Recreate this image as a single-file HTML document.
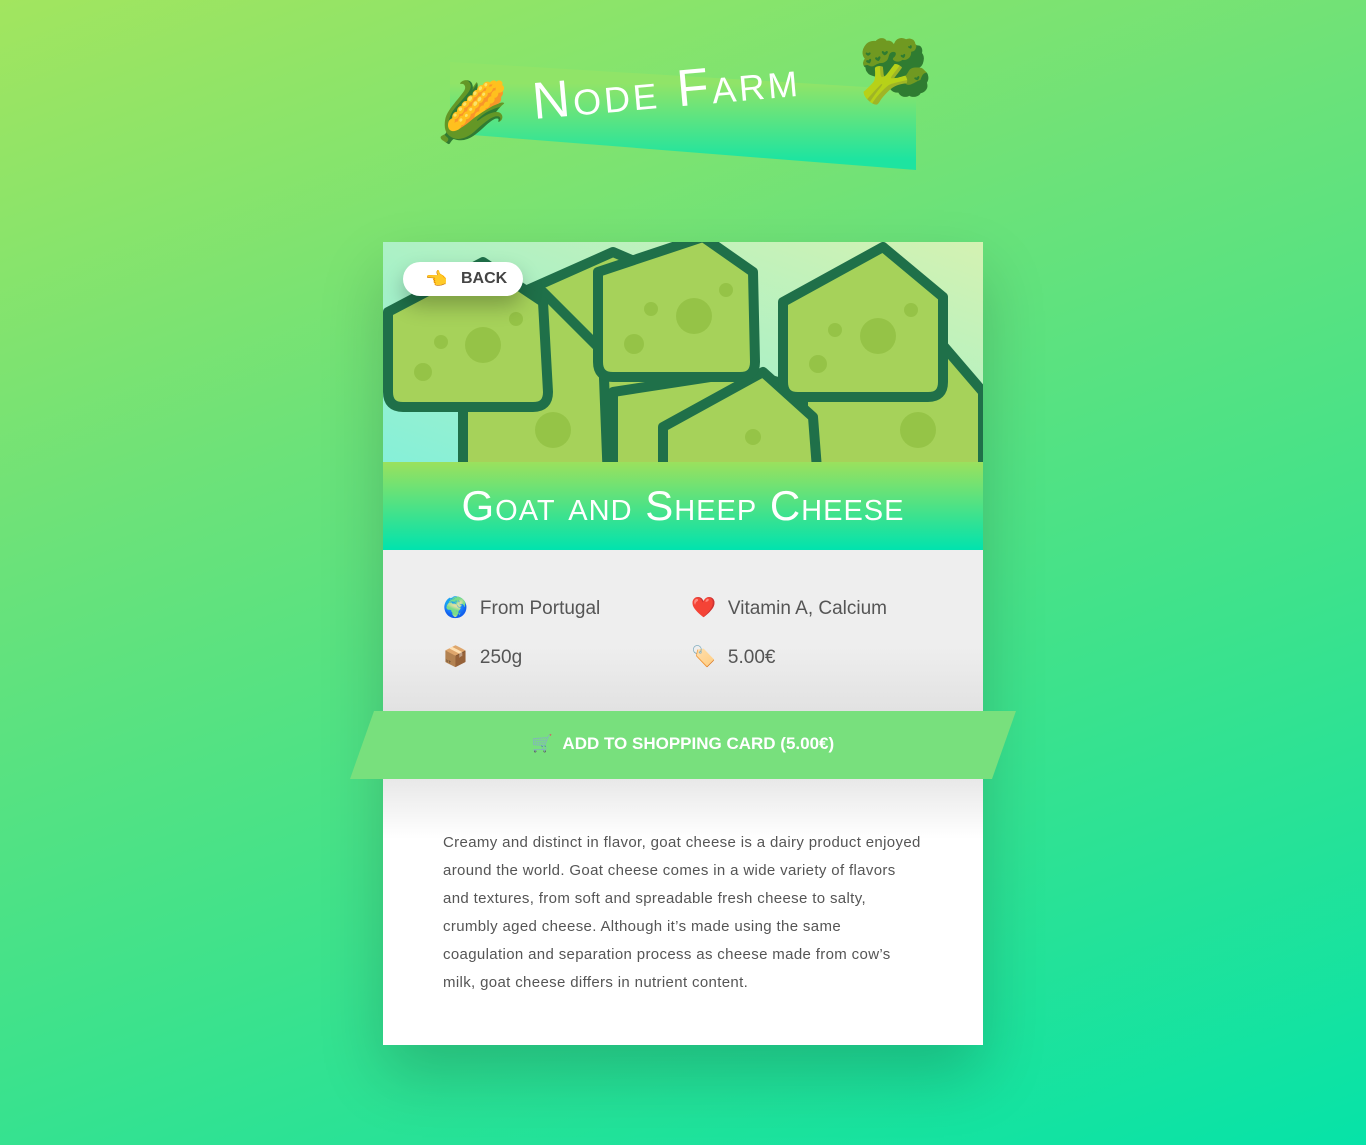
<!DOCTYPE html>
<html><head><meta charset="utf-8"><style>
*{margin:0;padding:0;box-sizing:border-box}
body{width:1366px;height:1145px;overflow:hidden;font-family:"Liberation Sans",sans-serif;background:linear-gradient(160deg,#a2e55f 0%,#6ae27a 35%,#3de28c 65%,#06e3a8 100%);position:relative}
.banner{position:absolute;left:450px;top:62px;width:466px;height:108px;clip-path:polygon(0 0,100% 26%,100% 100%,0 66%);background:linear-gradient(180deg,#90e468 20%,#1ee4a0 90%)}
.logo{position:absolute;left:535px;top:72px;color:#fff;font-size:52px;letter-spacing:3px;font-weight:300;transform:rotate(-5deg);transform-origin:left bottom;font-variant:small-caps;white-space:nowrap}
.card{position:absolute;left:383px;top:242px;width:600px;height:803px;background:#fff;box-shadow:0 30px 60px rgba(0,0,0,.18)}
.img{position:absolute;left:0;top:0;width:600px;height:220px;overflow:hidden}
.back{position:absolute;left:20px;top:20px;width:120px;height:34px;border-radius:17px;background:#fff;box-shadow:0 10px 20px rgba(0,0,0,.25);font-weight:bold;font-size:16px;color:#444;line-height:34px;padding-left:58px}
.back span{position:absolute;left:22px;top:0;font-size:18px}
.title{position:absolute;left:0;top:220px;width:600px;height:88px;background:linear-gradient(180deg,#9be15d,#00e3ae);color:#fff;text-align:center;font-size:42px;line-height:88px;font-weight:300;letter-spacing:1px;font-variant:small-caps}
.det{position:absolute;left:0;top:308px;width:600px;height:161px;background:linear-gradient(180deg,#eee 60%,#e2e2e2 100%)}
.it{position:absolute;font-size:19px;color:#555}
.it i{font-style:normal;font-size:20px;margin-right:12px}
.btn{position:absolute;left:-33px;top:469px;width:666px;height:68px;background:#78e07d;clip-path:polygon(24px 0,100% 0,calc(100% - 24px) 100%,0 100%);color:#fff;font-weight:bold;font-size:17px;text-align:center;line-height:66px}
.desc{position:absolute;left:0;top:537px;width:600px;height:266px;background:linear-gradient(180deg,#e8e8e8 0,#fff 60px)}
.desc p{position:absolute;left:60px;top:50px;width:482px;font-size:15px;line-height:28px;color:#555;letter-spacing:.35px}
</style></head><body>
<div class="banner"></div>
<div style="position:absolute;left:436px;top:84px;font-size:58px;line-height:1">🌽</div>
<div style="position:absolute;left:858px;top:42px;font-size:60px;line-height:1">🥦</div>
<div class="logo">Node Farm</div>
<div class="card">
 <div class="img">
  <svg width="600" height="220" viewBox="0 0 600 220">
   <defs><linearGradient id="bg" x1="0" y1="1" x2="1" y2="0"><stop offset="0" stop-color="#86f0d8"/><stop offset="1" stop-color="#d4f2b2"/></linearGradient></defs>
   <rect width="600" height="220" fill="url(#bg)"/>
   <g stroke="#1f7049" stroke-width="10" fill="#a6d25a" stroke-linejoin="round">
    <path d="M140 50 L230 10 L300 40 L300 240 L140 240Z"/>
    <path d="M80 230 L80 100 L160 50 L220 110 L225 240Z"/>
    <path d="M230 240 L230 150 L360 130 L430 150 L440 240Z"/>
    <path d="M420 240 L420 140 L540 80 L600 150 L600 240Z"/>
    <path d="M280 240 L280 185 L380 130 L430 175 L435 240Z"/>
    <path d="M5 70 L100 20 L160 60 L165 150 Q165 165 150 165 L20 165 Q5 165 5 150Z"/>
    <path d="M215 30 L320 -5 L370 30 L372 120 Q372 135 357 135 L230 135 Q215 135 215 120Z"/>
    <path d="M400 60 L500 5 L560 55 L560 140 Q560 155 545 155 L415 155 Q400 155 400 140Z"/>
   </g>
   <g fill="#8fbd3f" opacity=".7">
    <circle cx="100" cy="103" r="18"/><circle cx="58" cy="100" r="7"/><circle cx="40" cy="130" r="9"/><circle cx="133" cy="77" r="7"/>
    <circle cx="311" cy="74" r="18"/><circle cx="268" cy="67" r="7"/><circle cx="251" cy="102" r="10"/><circle cx="343" cy="48" r="7"/>
    <circle cx="495" cy="94" r="18"/><circle cx="452" cy="88" r="7"/><circle cx="435" cy="122" r="9"/><circle cx="528" cy="68" r="7"/>
    <circle cx="170" cy="188" r="18"/><circle cx="535" cy="188" r="18"/><circle cx="370" cy="195" r="8"/>
   </g>
  </svg>
  <div class="back"><span>👈</span>BACK</div>
 </div>
 <div class="title">Goat and Sheep Cheese</div>
 <div class="det">
  <div class="it" style="left:60px;top:45px"><i>🌍</i>From Portugal</div>
  <div class="it" style="left:308px;top:45px"><i>❤️</i>Vitamin A, Calcium</div>
  <div class="it" style="left:60px;top:94px"><i>📦</i>250g</div>
  <div class="it" style="left:308px;top:94px"><i>🏷️</i>5.00€</div>
 </div>
 <div class="desc"><p>Creamy and distinct in flavor, goat cheese is a dairy product enjoyed around the world. Goat cheese comes in a wide variety of flavors and textures, from soft and spreadable fresh cheese to salty, crumbly aged cheese. Although it’s made using the same coagulation and separation process as cheese made from cow’s milk, goat cheese differs in nutrient content.</p></div>
</div>
<div class="card" style="background:none;box-shadow:none">
 <div class="btn">🛒&nbsp;&nbsp;ADD TO SHOPPING CARD (5.00€)</div>
</div>
</body></html>
